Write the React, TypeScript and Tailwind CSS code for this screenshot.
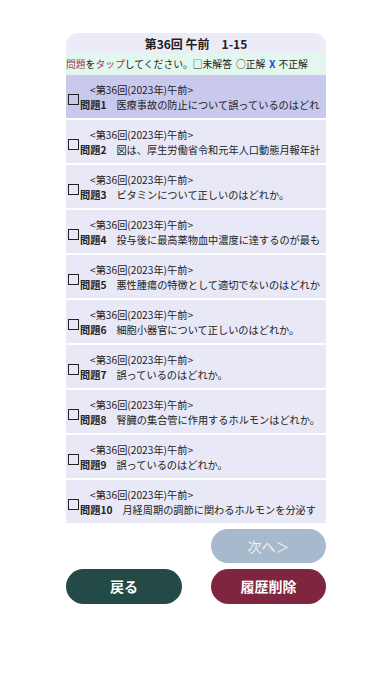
const questions = [
  { no: 1, text: '医療事故の防止について誤っているのはどれか。', active: true },
  { no: 2, text: '図は、厚生労働省令和元年人口動態月報年計（概数）である。' },
  { no: 3, text: 'ビタミンについて正しいのはどれか。' },
  { no: 4, text: '投与後に最高薬物血中濃度に達するのが最も早いのはどれか。' },
  { no: 5, text: '悪性腫瘍の特徴として適切でないのはどれか。' },
  { no: 6, text: '細胞小器官について正しいのはどれか。' },
  { no: 7, text: '誤っているのはどれか。' },
  { no: 8, text: '腎臓の集合管に作用するホルモンはどれか。' },
  { no: 9, text: '誤っているのはどれか。' },
  { no: 10, text: '月経周期の調節に関わるホルモンを分泌する器官はどれか。' },
];

function QuestionRow({ no, text, active }: { no: number; text: string; active?: boolean }) {
  return (
    <div
      className={`flex h-[43px] items-center overflow-hidden pl-[2px] pr-[3px] ${
        active ? 'bg-[#c9c9ee]' : 'bg-[#e8e8f7]'
      }`}
    >
      <span className="mt-[6px] h-[11px] w-[11px] shrink-0 border-[1.5px] border-[#222]" />
      <div className="ml-[1px] min-w-0 flex-1 text-[10.2px] leading-[15px] text-[#222]">
        <div className="whitespace-nowrap pl-[10px]">&lt;第36回(2023年)午前&gt;</div>
        <div className="flex">
          <span className="shrink-0 whitespace-nowrap font-bold">問題{no}</span>
          {/* wraps, second line hidden: clipped at a whole character */}
          <span className="ml-[10px] h-[15px] min-w-0 flex-1 overflow-hidden break-all [line-break:anywhere]">
            {text}
          </span>
        </div>
      </div>
    </div>
  );
}

export default function App() {
  return (
    <div
      className="min-h-screen bg-white pt-[33px]"
      style={{ fontFamily: '"Noto Sans CJK JP", "Noto Sans", sans-serif' }}
    >
      <div className="mx-auto w-[260px]">
        {/* Header */}
        <div className="flex h-[21px] items-center justify-center rounded-t-[12px] bg-[#ececf8] text-[12px] font-bold text-[#222]">
          第36回 午前　1-15
        </div>

        {/* Legend */}
        <div className="flex h-[21px] items-center gap-[4px] overflow-hidden whitespace-nowrap bg-[#e2f7ed] text-[9.8px] text-[#222]">
          <span>
            <span className="text-[#9c3b55]">問題</span>
            <span>を</span>
            <span className="text-[#9c3b55]">タップ</span>
            <span>してください。□未解答</span>
          </span>
          <span>○正解</span>
          <span>
            <span className="font-bold text-[#1d3fd6]">X</span>
            <span className="ml-[3px]">不正解</span>
          </span>
        </div>

        {/* Question list */}
        <div className="flex flex-col gap-[2px]">
          {questions.map((q) => (
            <QuestionRow key={q.no} {...q} />
          ))}
        </div>

        {/* Buttons */}
        <div className="mt-[6px] flex justify-end">
          <button className="h-[34px] w-[115px] rounded-full bg-[#a7bacd] text-[14px] text-[#eef2f6]">
            次へ＞
          </button>
        </div>
        <div className="mt-[6px] flex justify-between">
          <button className="h-[35px] w-[116px] rounded-full bg-[#244a48] text-[14px] font-bold text-white">
            戻る
          </button>
          <button className="h-[35px] w-[115px] rounded-full bg-[#80253f] text-[14px] font-bold text-white">
            履歴削除
          </button>
        </div>
      </div>
    </div>
  );
}
